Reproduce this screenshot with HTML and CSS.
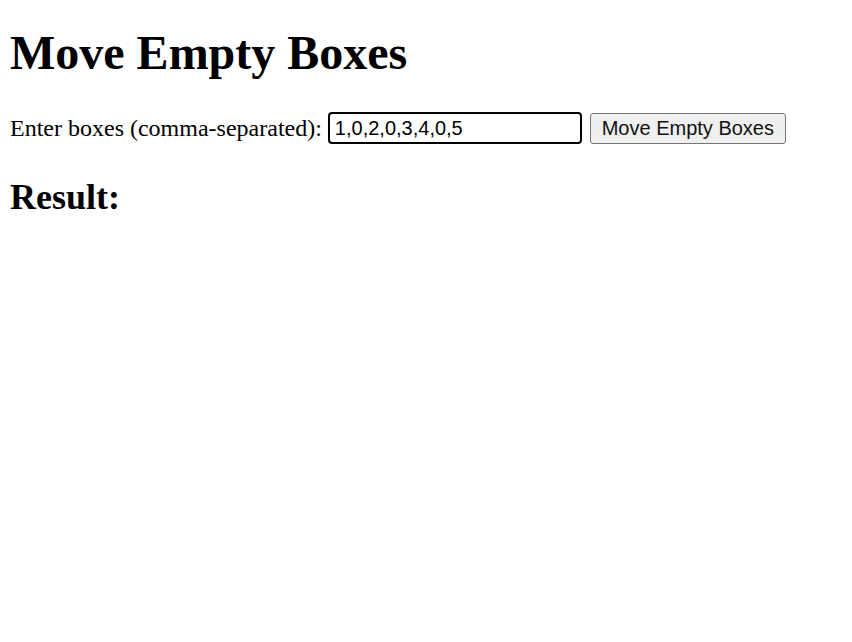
FILE: index.html
```html
<!DOCTYPE html>
<html>
<head>
<meta charset="utf-8">
<title>Move Empty Boxes</title>
<link rel="stylesheet" href="styles.css">
</head>
<body>
<h1 class="title">Move Empty Boxes</h1>
<div class="form-row">
  <label class="label" for="boxes">Enter boxes (comma-separated):</label>
  <input class="boxes-input" id="boxes" type="text" value="1,0,2,0,3,4,0,5">
  <button class="move-btn" type="button">Move Empty Boxes</button>
</div>
<h2 class="result-title">Result:</h2>
<div class="result"></div>
</body>
</html>
```

FILE: styles.css
```css
body {
  margin: 10px;
  font-family: "Liberation Serif", "Times New Roman", serif;
  font-size: 24px;
  color: #000;
  background: #fff;
}

.title {
  font-size: 48px;
  font-weight: bold;
  margin: 15px 0 32px;
}

.form-row {
  display: flex;
  align-items: center;
}

.label {
  margin-right: 6px;
}

.boxes-input {
  box-sizing: border-box;
  width: 254px;
  height: 32px;
  border: 2px solid #000;
  border-radius: 4px;
  padding: 1px 5px;
  margin-right: 8px;
  font-family: "Liberation Sans", Arial, sans-serif;
  font-size: 20px;
  color: #000;
  outline: none;
  background: #fff;
}

.move-btn {
  box-sizing: border-box;
  height: 31px;
  width: 196px;
  border: 1px solid #767676;
  border-radius: 3px;
  background: #efefef;
  padding: 1px 8px;
  font-family: "Liberation Sans", Arial, sans-serif;
  font-size: 20px;
  color: #111;
}

.result-title {
  font-size: 36px;
  font-weight: bold;
  margin: 32px 0;
}
```
